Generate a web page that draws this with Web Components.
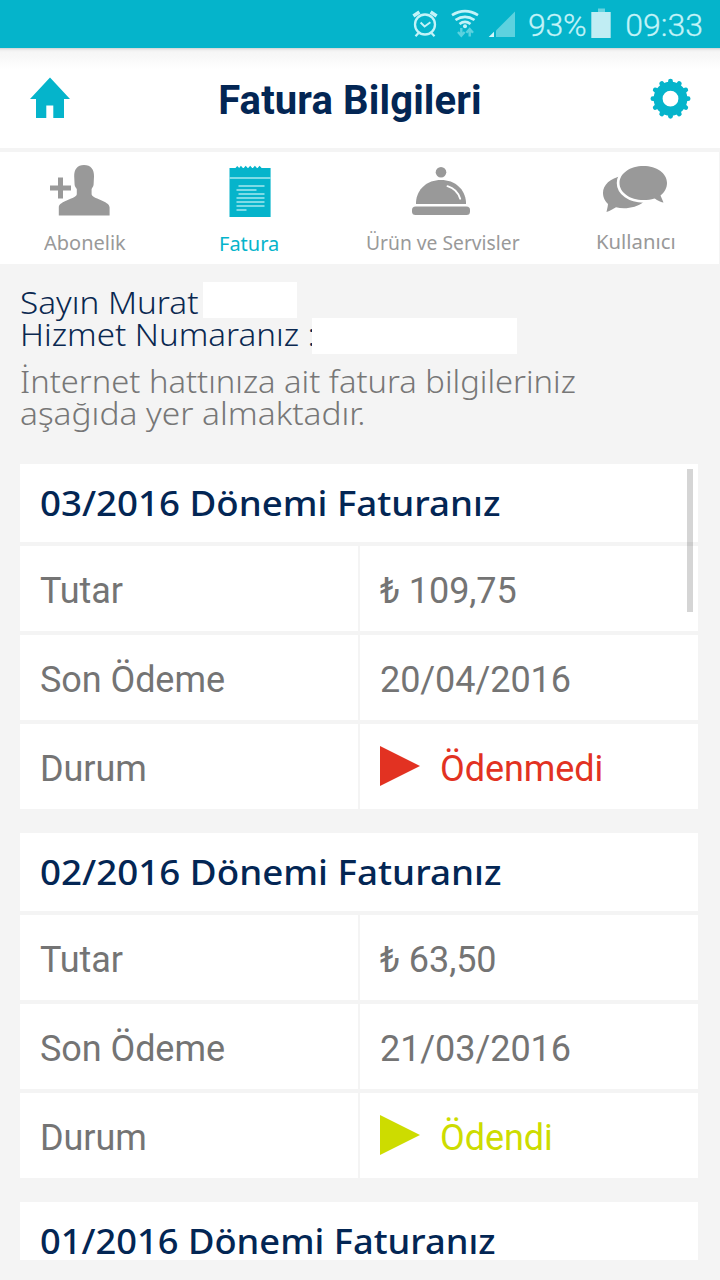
<!DOCTYPE html>
<html lang="tr">
<head>
<meta charset="utf-8">
<title>Fatura Bilgileri</title>
<style>
html,body{margin:0;height:100%;overflow:hidden;background:#f4f4f4}
body{font-family:Roboto,"Noto Sans",sans-serif}
</style>
</head>
<body>
<billing-app></billing-app>
<script>
const define = (name, html, init) => {
  const t = document.createElement('template');
  t.innerHTML = html;
  customElements.define(name, class extends HTMLElement {
    connectedCallback() {
      if (this.shadowRoot) return;
      this.attachShadow({mode: 'open'}).append(t.content.cloneNode(true));
      if (init) init.call(this, this.shadowRoot);
    }
  });
};

/* A single line of text set to a given measure. */
define('fit-line', `<style>
:host{display:block;white-space:nowrap;font-family:"Noto Sans","Open Sans",sans-serif}
span{display:inline-block;transform-origin:0 50%}
</style><span><slot></slot></span>`, function (root) {
  const w = +this.getAttribute('measure');
  const s = root.querySelector('span');
  this.style.width = w + 'px';
  s.style.transform = `scaleX(${w / s.offsetWidth})`;
});

define('status-bar', `<style>
:host{display:flex;height:48px;box-sizing:border-box;background:#05b4cb;color:#c3f3f8;justify-content:flex-end;align-items:center;padding-right:17px;font:300 32px/46px Roboto,sans-serif}
svg{display:block;flex:none}
.signals{margin-right:2px}
span{padding-top:1px;-webkit-text-stroke:.3px #c3f3f8}
.charge{letter-spacing:-.3px}
.clock{margin-left:13px}
</style>
<svg class="signals" width="115" height="48" viewBox="410 0 115 48" fill="none" stroke="#c3f3f8">
<circle cx="424" cy="24.5" r="10" stroke-width="2.3"/>
<path d="M419.6 22.5l4 4 5.8-4.2" stroke-width="1.9"/>
<path d="M412.4 16l6-4.1M435.6 16l-6-4.1" stroke-width="3.6"/>
<path d="M414.5 36.3l3-3.3M433.5 36.3l-3-3.3" stroke-width="2.2"/>
<path d="M451 15.2Q464 7.2 477 15.2M454.5 20Q464 13.6 473.5 20M458.5 24Q464 19.8 469.5 24" stroke-width="2.7"/>
<circle cx="464" cy="26.2" r="2" fill="#c3f3f8" stroke="none"/>
<g stroke="#5cd2df" stroke-width="2.4"><path d="M460.3 28v7M457 32l3.3 3.7 3.3-3.7M468.7 36.5v-7M465.4 32.7l3.3-3.7 3.3 3.7"/></g>
<path d="M514 11.5V37H495V30.5z" fill="#5dd2df" stroke="none"/><path d="M487.7 37l5.3-5.3V37z" fill="#d4f7fa" stroke="none"/>
</svg>
<span class="charge">93%</span>
<svg width="26" height="48" viewBox="586 0 26 48"><path fill="#69d3df" d="M598 8.5h7V12h-7z"/><path fill="#c0edf3" d="M591.3 12h19.4v26h-19.4z"/></svg>
<span class="clock">09:33</span>`);

define('app-header', `<style>
:host{display:grid;grid-template-columns:100px 1fr 100px;height:100px;background:linear-gradient(#cfd3d4 0,#eeeeee 2px,#f6f6f6 4px,#f8f8f8 9px,#fff 21px);color:#032654;align-items:center}
h1{margin:0;padding:5px 20px 0 0;text-align:center;font:700 40px/48px Roboto,sans-serif;white-space:nowrap;letter-spacing:.13px}
svg{display:block}
</style>
<svg width="100" height="100" viewBox="0 48 100 100" fill="#05b4cb"><path d="M50 77.5L70 99h-6v19H53.3v-12.5h-7V118H36V99h-6z"/></svg>
<h1><slot></slot></h1>
<svg id="g" width="100" height="100" viewBox="620 48 100 100" fill="none" stroke="#05b4cb"><circle cx="670.5" cy="98.7" r="12.4" stroke-width="9"/></svg>`, function (root) {
  const g = root.getElementById('g');
  for (let i = 0; i < 12; i++) {
    const a = i * Math.PI / 6, c = Math.cos(a), s = Math.sin(a);
    const l = document.createElementNS('http://www.w3.org/2000/svg', 'path');
    l.setAttribute('d', `M${670.5 + 14 * c} ${98.7 + 14 * s}L${670.5 + 17.6 * c} ${98.7 + 17.6 * s}`);
    l.setAttribute('stroke-width', 4.8);
    l.setAttribute('stroke-linecap', 'round');
    g.append(l);
  }
});

define('tab-item', `<style>
:host{display:flex;flex-direction:column;align-items:center;color:#999;font-size:19px;line-height:26px;font-weight:400}
:host([active]){color:#05b4cb;font-weight:450}
.icon{height:78px}
</style><div class="icon"><slot name="icon"></slot></div><slot></slot>`);

define('tab-bar', `<style>
:host{display:grid;grid-template-columns:169px 159px 230px 155px;height:112px;margin-top:4px;background:#fff;box-shadow:inset -1px 0 #f4f4f4}
svg{display:block;fill:#999}
.up{margin-top:-1px}.down{margin-top:1px}
</style>
<tab-item><svg slot="icon" width="169" height="77" viewBox="0 152 169 77"><path d="M58 177.5h5v8h8v5h-8v8h-5v-8h-8v-5h8z"/><path d="M84 165c7 0 10.200 4.600 10 11.500l-.4 8c-.2 2-1.400 3.400-2 4.500v5c0 5 18 6.500 18 13.500V215.500H58.800V207.500c0-7 18-8.500 18-13.500v-5c-1-1.200-2-2.500-2.200-4.500l-.4-8c-.2-7 3-11.500 9.800-11.500z"/></svg><fit-line measure="82">Abonelik</fit-line></tab-item>
<tab-item active><svg slot="icon" width="159" height="77" viewBox="169 152 159 77"><path fill="#05b4cb" d="M229.500 168h6l1.700-2 2 2 1.700-2.200 2 2.200h.8l2-2.200 2 2.200h.5l2-2.200 2 2.200h.7l2-2.200 2 2.200h.7l2-2.200 2 2.200H270.600V217H229.500z"/><path d="M229.500 178h41.100M238.500 186h26M236.500 190h20M238.500 194h26M236.500 198h28M236.500 202h28M236.500 206h28M236.500 210h10" stroke="#a5e8ef" stroke-width="1.700"/></svg><fit-line class="down" measure="60">Fatura</fit-line></tab-item>
<tab-item><svg slot="icon" width="230" height="77" viewBox="328 152 230 77"><circle cx="441" cy="172.200" r="5.300"/><path d="M416 204v-2c1-13 11-22 25-22s24 9 25 22v2z"/><rect x="412" y="206.500" width="58" height="8.500" rx="3.500"/><path d="M447.500 186.200q9.500 2.800 12.700 12.500" fill="none" stroke="#fff" stroke-width="1.900" stroke-linecap="round"/></svg><fit-line measure="154">Ürün ve Servisler</fit-line></tab-item>
<tab-item><svg slot="icon" width="155" height="77" viewBox="558 152 155 77"><path d="M622 176c-12 2-19 9-19 17 0 5 2.500 8.500 5 11-.2 3-1 5-1.500 8 4-1 6.500-3 9.500-4.700 9 2.200 20.500.5 27.500-5.300z"/><path d="M643.500 166c13 0 23.500 7 23.500 17 0 5-2.500 9.500-6.500 12.500l3 7c-4.500-.8-6-2.600-9-4.100-3.500 1.200-7 1.600-11 1.600-13.500 0-24-7.500-24-17s10.500-17 24-17z" stroke="#fff" stroke-width="5.500" paint-order="stroke"/></svg><fit-line class="up" measure="80">Kullanıcı</fit-line></tab-item>`);

define('customer-intro', `<style>
:host{display:block;position:relative;padding:22px 20px 0 20px;height:179px;box-sizing:border-box;font-weight:320;font-size:32px;line-height:32px;color:#0a2850}
.note{margin-top:15px;color:#777}
.mask{position:absolute;background:#fff;height:36px}
.a{left:203px;top:18px;width:94px}.b{left:312px;top:54px;width:205px}
</style>
<fit-line measure="178">Sayın Murat</fit-line>
<fit-line measure="296">Hizmet Numaranız :</fit-line>
<div class="note"><fit-line measure="556">İnternet hattınıza ait fatura bilgileriniz</fit-line>
<fit-line measure="345">aşağıda yer almaktadır.</fit-line></div>
<i class="mask a"></i><i class="mask b"></i>`);

define('bill-row', `<style>
:host{display:grid;grid-template-columns:338px 338px;column-gap:2px;height:85px;margin-top:4px;color:#747474;font:400 36px/42px Roboto,sans-serif}
div{background:#fff;display:flex;align-items:center;padding:5px 20px 0;white-space:nowrap;letter-spacing:-.07px}
</style><div><slot name="label"></slot></div><div><slot></slot></div>`);

define('bill-status', `<style>
:host{display:flex;align-items:center;gap:20px;color:#e23222}
:host([paid]){color:#cddc00}
svg{display:block;margin-top:-6px;fill:currentColor}
</style><svg width="40" height="40"><path d="M0 0l40 20L0 40z"/></svg><slot></slot>`);

define('bill-card', `<style>
:host{display:block;margin-bottom:24px}
header{background:#fff;height:78px;padding-left:20px;color:#032654;font-size:35px;line-height:78px;font-weight:460}
</style><header><slot name="title"></slot></header><slot></slot>`);

define('bill-list', `<style>
:host{display:block;position:relative;margin:0 22px 0 20px;padding-top:21px;height:796px;overflow:hidden}
.thumb{position:absolute;left:667px;top:26px;width:6px;height:143px;background:rgba(0,0,0,.165)}
</style><slot></slot><div class="thumb"></div>`);

define('billing-app', `<style>
:host{display:block;width:720px;height:1280px;overflow:hidden;background:#f4f4f4}
</style>
<status-bar></status-bar>
<app-header>Fatura Bilgileri</app-header>
<tab-bar></tab-bar>
<customer-intro></customer-intro>
<bill-list>
<bill-card><fit-line slot="title" measure="460">03/2016 Dönemi Faturanız</fit-line>
<bill-row><span slot="label">Tutar</span>₺ 109,75</bill-row>
<bill-row><span slot="label">Son Ödeme</span>20/04/2016</bill-row>
<bill-row><span slot="label">Durum</span><bill-status>Ödenmedi</bill-status></bill-row></bill-card>
<bill-card><fit-line slot="title" measure="461">02/2016 Dönemi Faturanız</fit-line>
<bill-row><span slot="label">Tutar</span>₺ 63,50</bill-row>
<bill-row><span slot="label">Son Ödeme</span>21/03/2016</bill-row>
<bill-row><span slot="label">Durum</span><bill-status paid>Ödendi</bill-status></bill-row></bill-card>
<bill-card><fit-line slot="title" measure="455">01/2016 Dönemi Faturanız</fit-line></bill-card>
</bill-list>`);
</script>
</body>
</html>
